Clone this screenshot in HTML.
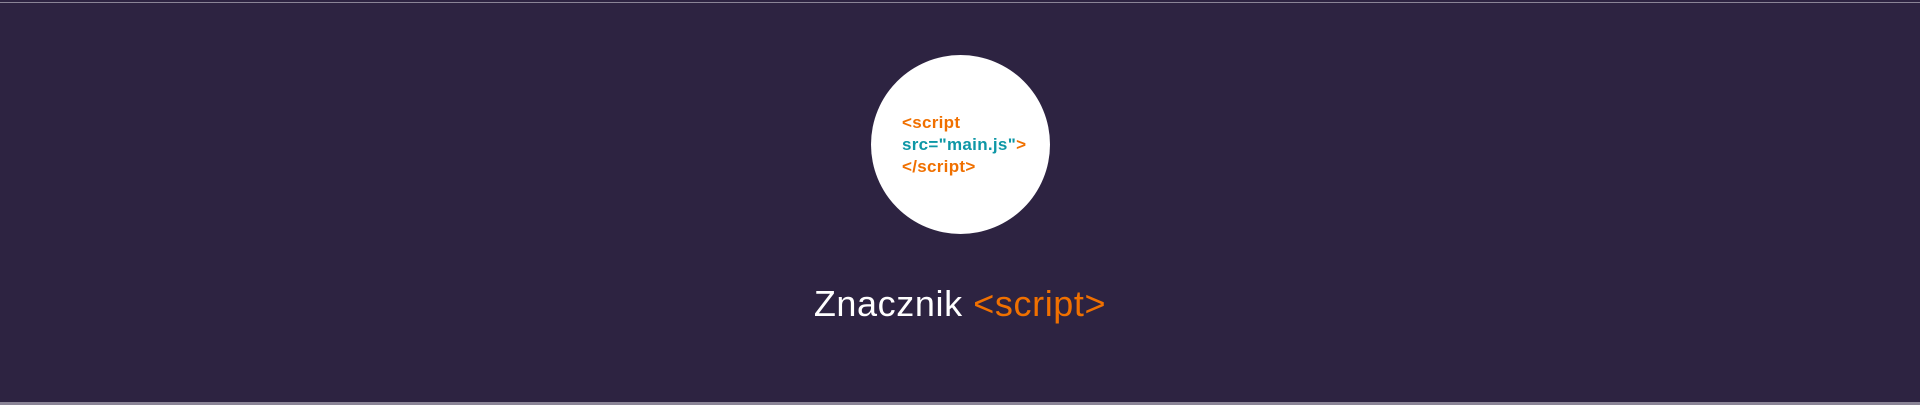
<!DOCTYPE html>
<html><head><meta charset="utf-8"><style>
html,body{margin:0;padding:0;}
body{width:1920px;height:405px;background:#2d2341;position:relative;overflow:hidden;font-family:"Liberation Sans",sans-serif;}
.tl{position:absolute;left:0;top:2px;width:1920px;height:1px;background:#8a8496;}
.bl{position:absolute;left:0;top:402px;width:1920px;height:3px;background:#8a8496;}
.c{position:absolute;left:871px;top:55px;width:179px;height:179px;border-radius:50%;background:#fff;}
.code{position:absolute;left:902px;top:112px;font-weight:bold;font-size:17px;line-height:22px;color:#f07000;letter-spacing:0.3px;}
.code .b{color:#0e97a6;}
.t{position:absolute;left:0;width:1920px;text-align:center;top:283px;font-size:36px;letter-spacing:0.6px;color:#fff;}
.t span{color:#f07000;}
</style></head><body>
<div class="tl"></div><div class="bl"></div>
<div class="c"></div>
<div class="code">&lt;script<br><span class="b">src="main.js"</span>&gt;<br>&lt;/script&gt;</div>
<div class="t">Znacznik <span>&lt;script&gt;</span></div>
</body></html>
